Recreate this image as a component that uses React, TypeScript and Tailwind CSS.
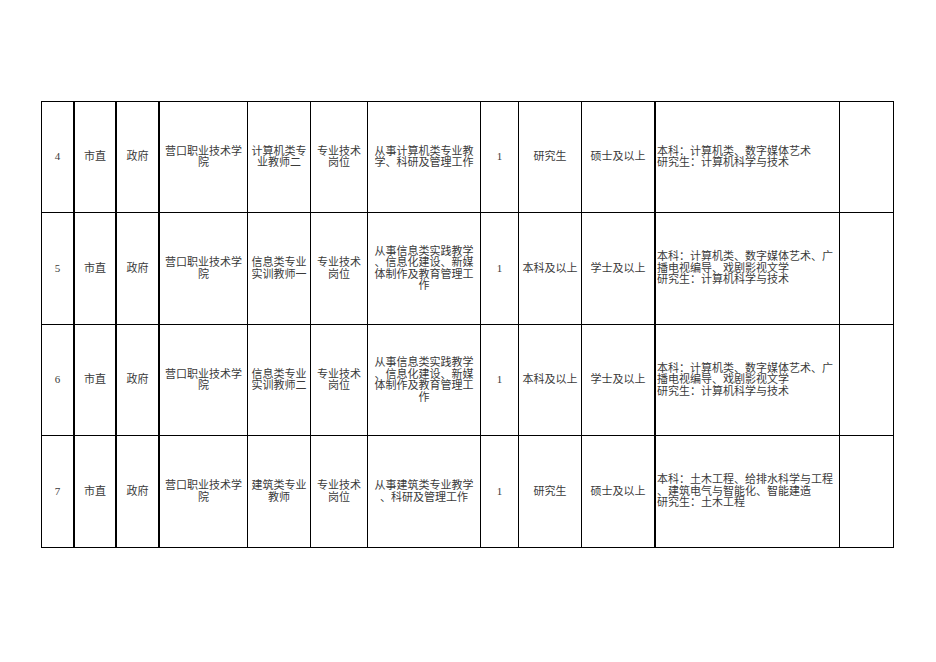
import React from "react";

type Row = {
  h: string;
  cells: string[][];
};

// column widths (border-box, incl. right border) and border weights
const cols = [
  { w: "w-[33px]", b: "border-r-2" },
  { w: "w-[42px]", b: "border-r-2" },
  { w: "w-[43px]", b: "border-r-2" },
  { w: "w-[88px]", b: "border-r" },
  { w: "w-[63px]", b: "border-r" },
  { w: "w-[57px]", b: "border-r" },
  { w: "w-[113px]", b: "border-r" },
  { w: "w-[38px]", b: "border-r" },
  { w: "w-[63px]", b: "border-r" },
  { w: "w-[74px]", b: "border-r-2" },
  { w: "w-[184px]", b: "border-r" },
  { w: "w-[54px]", b: "border-r" },
];

const rows: Row[] = [
  {
    h: "h-[111px]",
    cells: [
      ["4"],
      ["市直"],
      ["政府"],
      ["营口职业技术学", "院"],
      ["计算机类专", "业教师二"],
      ["专业技术", "岗位"],
      ["从事计算机类专业教", "学、科研及管理工作"],
      ["1"],
      ["研究生"],
      ["硕士及以上"],
      ["本科：计算机类、数字媒体艺术", "研究生：计算机科学与技术"],
      [],
    ],
  },
  {
    h: "h-[112px]",
    cells: [
      ["5"],
      ["市直"],
      ["政府"],
      ["营口职业技术学", "院"],
      ["信息类专业", "实训教师一"],
      ["专业技术", "岗位"],
      ["从事信息类实践教学", "、信息化建设、新媒", "体制作及教育管理工", "作"],
      ["1"],
      ["本科及以上"],
      ["学士及以上"],
      ["本科：计算机类、数字媒体艺术、广", "播电视编导、戏剧影视文学", "研究生：计算机科学与技术"],
      [],
    ],
  },
  {
    h: "h-[111px]",
    cells: [
      ["6"],
      ["市直"],
      ["政府"],
      ["营口职业技术学", "院"],
      ["信息类专业", "实训教师二"],
      ["专业技术", "岗位"],
      ["从事信息类实践教学", "、信息化建设、新媒", "体制作及教育管理工", "作"],
      ["1"],
      ["本科及以上"],
      ["学士及以上"],
      ["本科：计算机类、数字媒体艺术、广", "播电视编导、戏剧影视文学", "研究生：计算机科学与技术"],
      [],
    ],
  },
  {
    h: "h-[112px]",
    cells: [
      ["7"],
      ["市直"],
      ["政府"],
      ["营口职业技术学", "院"],
      ["建筑类专业", "教师"],
      ["专业技术", "岗位"],
      ["从事建筑类专业教学", "、科研及管理工作"],
      ["1"],
      ["研究生"],
      ["硕士及以上"],
      ["本科：土木工程、给排水科学与工程", "、建筑电气与智能化、智能建造", "研究生：土木工程"],
      [],
    ],
  },
];

export default function App() {
  return (
    <div
      className="min-h-[662px] w-[936px] bg-white pl-[41px] pt-[101px] text-[11px] text-[#3a3a3a]"
      style={{ fontFamily: '"Liberation Serif", "Noto Sans CJK SC", serif' }}
    >
      <div className="w-[853px] border-l border-t border-black">
        {rows.map((row, ri) => (
          <div key={ri} className={`flex ${row.h}`}>
            {row.cells.map((lines, ci) => (
              <div
                key={ci}
                className={`flex shrink-0 flex-col justify-center border-b border-black ${cols[ci].w} ${cols[ci].b} ${
                  ci === 10 ? "items-start pl-[1px]" : "items-center text-center"
                }`}
              >
                {lines.map((t, li) => (
                  <span key={li} className="block h-[11.5px] whitespace-nowrap leading-[11.5px]">
                    {t}
                  </span>
                ))}
              </div>
            ))}
          </div>
        ))}
      </div>
    </div>
  );
}
